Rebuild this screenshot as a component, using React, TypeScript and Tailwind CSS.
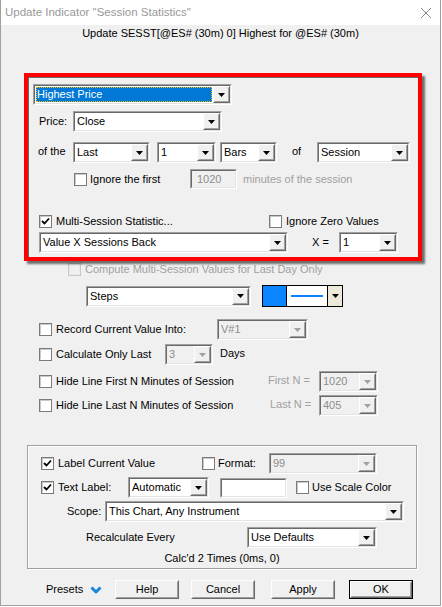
import React from "react";

function Tri({ disabled = false }: { disabled?: boolean }) {
  return (
    <svg width="7" height="4" viewBox="0 0 7 4" className="block">
      <path d="M0 0 H7 L3.5 4 Z" fill={disabled ? "#a0a0a0" : "#000"} />
    </svg>
  );
}

function ArrowBtn({ disabled = false }: { disabled?: boolean }) {
  return (
    <div className="w-[17px] h-full shrink-0 border border-t-white border-l-white border-r-[#696969] border-b-[#696969] bg-[#f0f0f0]">
      <div className="w-full h-full border border-t-[#f0f0f0] border-l-[#f0f0f0] border-r-[#a0a0a0] border-b-[#a0a0a0] flex items-center justify-center">
        <Tri disabled={disabled} />
      </div>
    </div>
  );
}

function Sunken({ w, children, disabled = false, h = "h-[21px]" }: { w: string; children?: React.ReactNode; disabled?: boolean; h?: string }) {
  return (
    <div className={`${w} ${h} shrink-0 border border-t-[#a0a0a0] border-l-[#a0a0a0] border-r-white border-b-white`}>
      <div className={`w-full h-full flex border border-t-[#696969] border-l-[#696969] border-r-[#e3e3e3] border-b-[#e3e3e3] ${disabled ? "bg-[#f0f0f0]" : "bg-white"}`}>
        {children}
      </div>
    </div>
  );
}

function Combo({ w, text, disabled = false, selected = false }: { w: string; text: string; disabled?: boolean; selected?: boolean }) {
  return (
    <Sunken w={w} disabled={disabled}>
      {selected ? (
        <div className="flex-1 min-w-0 p-[1px]">
          <div className="h-full bg-[#0078d7] text-white leading-[15px] pl-[1px] outline outline-1 outline-dotted outline-[#e8c000] -outline-offset-1 whitespace-nowrap overflow-hidden">
            {text}
          </div>
        </div>
      ) : (
        <div className={`flex-1 min-w-0 pl-[2px] leading-[17px] whitespace-nowrap overflow-hidden ${disabled ? "text-[#8c8c8c]" : "text-black"}`}>
          {text}
        </div>
      )}
      <ArrowBtn disabled={disabled} />
    </Sunken>
  );
}

function Check({ checked = false, disabled = false }: { checked?: boolean; disabled?: boolean }) {
  return (
    <div className={`w-[13px] h-[13px] shrink-0 border ${disabled ? "border-[#c8c8c8] bg-[#f0f0f0]" : "border-[#7a7a7a] bg-white"} flex items-center justify-center`}>
      <div className={`w-[11px] h-[11px] border ${disabled ? "border-[#e8e8e8]" : "border-t-[#c8c8c8] border-l-[#c8c8c8] border-r-white border-b-white"} flex items-center justify-center`}>
        {checked && (
          <svg width="9" height="9" viewBox="0 0 9 9" className="block">
            <path d="M1 4 L3.5 6.5 L8 1.5" stroke="#000" strokeWidth="1.8" fill="none" />
          </svg>
        )}
      </div>
    </div>
  );
}

function Btn({ label, def = false, ml }: { label: string; def?: boolean; ml: string }) {
  return (
    <div className={`${ml} w-[64px] h-[19px] shrink-0 ${def ? "border border-black" : ""}`}>
      <div className="w-full h-full border border-t-white border-l-white border-r-[#696969] border-b-[#696969] bg-[#f0f0f0]">
        <div className="w-full h-full border border-t-[#f0f0f0] border-l-[#f0f0f0] border-r-[#a0a0a0] border-b-[#a0a0a0] flex items-center justify-center leading-none">
          {label}
        </div>
      </div>
    </div>
  );
}

export default function App() {
  return (
    <div className="w-[442px] h-[607px] bg-white relative overflow-hidden text-[11px] text-black" style={{ fontFamily: '"Liberation Sans", Arial, sans-serif' }}>
      <div className="w-[441px] h-[606px] bg-[#f0f0f0] flex flex-col">
        {/* Title bar */}
        <div className="h-[25px] bg-white flex items-center justify-between pl-[5px] pr-[9px]">
          <span className="text-[11.5px] text-[#999999]">Update Indicator "Session Statistics"</span>
          <svg width="12" height="12" viewBox="0 0 12 12" className="block">
            <path d="M1 1 L11 11 M11 1 L1 11" stroke="#8a8a8a" strokeWidth="1" />
          </svg>
        </div>
        {/* Subtitle */}
        <div className="h-[16px] leading-[16px] text-center">Update SESST[@ES# (30m) 0] Highest for @ES# (30m)</div>

        {/* Row B */}
        <div className="mt-[43px] pl-[33px] flex">
          <Combo w="w-[199px]" text="Highest Price" selected />
        </div>
        {/* Row C */}
        <div className="mt-[6px] pl-[39px] flex items-center">
          <div className="w-[34px]">Price:</div>
          <Combo w="w-[149px]" text="Close" />
        </div>
        {/* Row D */}
        <div className="mt-[10px] pl-[38px] flex items-center">
          <div className="w-[35px] -mt-[2px]">of the</div>
          <Combo w="w-[77px]" text="Last" />
          <div className="ml-[7px]"><Combo w="w-[59px]" text="1" /></div>
          <div className="ml-[4px]"><Combo w="w-[57px]" text="Bars" /></div>
          <div className="ml-[15px] w-[25px] -mt-[3px]">of</div>
          <Combo w="w-[93px]" text="Session" />
        </div>
        {/* Row E */}
        <div className="mt-[6px] pl-[74px] flex items-center h-[20px]">
          <Check />
          <div className="ml-[3px] w-[100px]">Ignore the first</div>
          <Sunken w="w-[47px]" h="h-[20px]" disabled>
            <div className="pl-[5px] leading-[16px] text-[#8c8c8c]">1020</div>
          </Sunken>
          <div className="ml-[6px] text-[#a0a0a0]">minutes of the session</div>
        </div>
        {/* Row F */}
        <div className="mt-[26px] pl-[39px] flex items-center h-[13px]">
          <Check checked />
          <div className="ml-[4px] w-[213px]">Multi-Session Statistic...</div>
          <Check />
          <div className="ml-[4px]">Ignore Zero Values</div>
        </div>
        {/* Row G */}
        <div className="mt-[4px] pl-[39px] flex items-center">
          <Combo w="w-[249px]" text="Value X Sessions Back" />
          <div className="ml-[24px] w-[27px]">X =</div>
          <Combo w="w-[59px]" text="1" />
        </div>
        {/* Row H */}
        <div className="mt-[10px] pl-[68px] flex items-center h-[13px]">
          <Check disabled />
          <div className="ml-[4px] text-[#a0a0a0]">Compute Multi-Session Values for Last Day Only</div>
        </div>
        {/* Row I */}
        <div className="mt-[9px] pl-[86px] flex items-center">
          <Combo w="w-[165px]" text="Steps" />
          <div className="ml-[11px] w-[81px] h-[22px] border border-black flex">
            <div className="w-[23px] h-full bg-[#0a84ff]" />
            <div className="w-[41px] h-full bg-white border-l border-black flex items-center justify-center">
              <div className="w-[32px] h-[2px] bg-[#0a84ff]" />
            </div>
            <div className="flex-1 h-full bg-[#ece9d8] border-l border-black flex items-center justify-center">
              <Tri />
            </div>
          </div>
        </div>
        {/* Row J */}
        <div className="mt-[12px] pl-[39px] flex items-center">
          <Check />
          <div className="ml-[4px] w-[161px]">Record Current Value Into:</div>
          <Combo w="w-[91px]" text="V#1" disabled />
        </div>
        {/* Row K */}
        <div className="mt-[4px] pl-[39px] flex items-center">
          <Check />
          <div className="ml-[4px] w-[109px]">Calculate Only Last</div>
          <Combo w="w-[48px]" text="3" disabled />
          <div className="ml-[7px] -mt-[3px]">Days</div>
        </div>
        {/* Row L */}
        <div className="mt-[6px] pl-[39px] flex items-center">
          <Check />
          <div className="ml-[4px] w-[212px]">Hide Line First N Minutes of Session</div>
          <div className="w-[51px] text-[#a0a0a0] -mt-[2px]">First N =</div>
          <Combo w="w-[59px]" text="1020" disabled />
        </div>
        {/* Row M */}
        <div className="mt-[3px] pl-[39px] flex items-center">
          <Check />
          <div className="ml-[4px] w-[214px]">Hide Line Last N Minutes of Session</div>
          <div className="w-[49px] text-[#a0a0a0] -mt-[2px]">Last N =</div>
          <Combo w="w-[59px]" text="405" disabled />
        </div>

        {/* Group box */}
        <div className="mt-[29px] ml-[27px] w-[390px] h-[124px] border border-[#a0a0a0] shadow-[inset_1px_1px_0_#ffffff,1px_1px_0_#ffffff] flex flex-col">
          <div className="mt-[7px] pl-[13px] flex items-center">
            <Check checked />
            <div className="ml-[4px] w-[144px]">Label Current Value</div>
            <Check />
            <div className="ml-[3px] w-[51px]">Format:</div>
            <Combo w="w-[108px]" text="99" disabled />
          </div>
          <div className="mt-[3px] pl-[13px] flex items-center">
            <Check checked />
            <div className="ml-[4px] w-[70px]">Text Label:</div>
            <Combo w="w-[81px]" text="Automatic" />
            <div className="ml-[11px]"><Sunken w="w-[67px]" h="h-[20px]" /></div>
            <div className="ml-[9px]"><Check /></div>
            <div className="ml-[3px]">Use Scale Color</div>
          </div>
          <div className="mt-[3px] pl-[39px] flex items-center">
            <div className="w-[38px]">Scope:</div>
            <Combo w="w-[299px]" text="This Chart, Any Instrument" />
          </div>
          <div className="mt-[5px] pl-[58px] flex items-center">
            <div className="w-[161px]">Recalculate Every</div>
            <Combo w="w-[130px]" text="Use Defaults" />
          </div>
          <div className="mt-[3px] h-[14px] leading-[14px] text-center">Calc'd 2 Times (0ms, 0)</div>
        </div>

        {/* Buttons */}
        <div className="mt-[11px] pl-[46px] flex items-center">
          <div className="w-[44px] -mt-[1px]">Presets</div>
          <svg width="12" height="9" viewBox="0 0 12 9" className="block mt-[2px]">
            <path d="M1.5 1.5 L6 6 L10.5 1.5" stroke="#1c86d9" strokeWidth="3" fill="none" strokeLinejoin="round" />
          </svg>
          <Btn label="Help" ml="ml-[13px]" />
          <Btn label="Cancel" ml="ml-[12px]" />
          <Btn label="Apply" ml="ml-[16px]" />
          <Btn label="OK" ml="ml-[14px]" def />
        </div>
      </div>

      {/* window border */}
      <div className="absolute left-0 top-0 w-[441px] h-[606px] border-x border-b border-[#a0a0a0] pointer-events-none" />

      {/* red annotation box */}
      <div className="absolute left-[24px] top-[73px] w-[398px] h-[188px] border-[4px] border-[#ff0000] shadow-[3px_3px_2px_rgba(0,0,0,0.55),inset_1px_1px_0_#6a6a6a] pointer-events-none" />
    </div>
  );
}
